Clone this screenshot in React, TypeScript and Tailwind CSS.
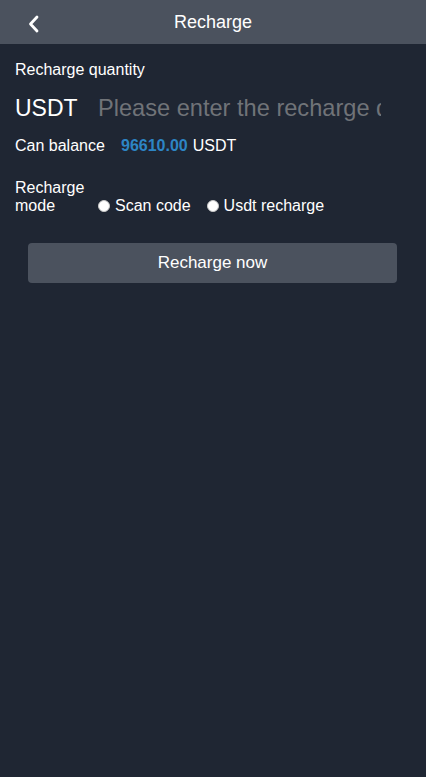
import { useState } from "react";

export default function App() {
  const [mode, setMode] = useState<string>("");
  const [amount, setAmount] = useState("");

  return (
    <div className="min-h-[777px] w-full bg-[#1f2633] text-white font-['Liberation_Sans',Arial,sans-serif]">
      <header className="relative flex h-11 items-center justify-center bg-[#4b525e]">
        <button className="absolute left-[23px] top-[11px] p-1" aria-label="Back">
          <svg width="14" height="18" viewBox="0 0 14 18" fill="none">
            <path d="M10 2 L3.5 9 L10 16" stroke="white" strokeWidth="2.8" strokeLinecap="round" strokeLinejoin="round" />
          </svg>
        </button>
        <h1 className="text-[18px] leading-none">Recharge</h1>
      </header>

      <main className="px-[15px]">
        <div className="pt-[17px] text-[16px] leading-[18px]">Recharge quantity</div>

        <div className="mt-[15px] flex items-center">
          <span className="w-[83px] text-[23px] leading-[28px]">USDT</span>
          <input
            value={amount}
            onChange={(e) => setAmount(e.target.value)}
            placeholder="Please enter the recharge quantity"
            className="w-[283px] bg-transparent text-[23.6px] leading-[28px] text-white outline-none placeholder:text-[#707378]"
          />
        </div>

        <div className="mt-[15px] flex items-center text-[16px] leading-[18px]">
          <span className="w-[106px]">Can balance</span>
          <span className="font-bold text-[#2d85c5]">96610.00</span>
          <span className="ml-[5px]">USDT</span>
        </div>

        <div className="mt-[24px] flex items-end text-[16px] leading-[18px]">
          <span className="w-[83px]">
            Recharge
            <br />
            mode
          </span>
          {[
            { id: "scan", label: "Scan code" },
            { id: "usdt", label: "Usdt recharge" },
          ].map((o) => (
            <label key={o.id} className="mr-[16px] flex cursor-pointer items-center">
              <span
                onClick={() => setMode(o.id)}
                className="mr-[5px] flex h-[12px] w-[12px] items-center justify-center rounded-full border border-[#c8c8c8] bg-white"
              >
                {mode === o.id && <span className="h-[6px] w-[6px] rounded-full bg-[#2d85c5]" />}
              </span>
              <span onClick={() => setMode(o.id)}>{o.label}</span>
            </label>
          ))}
        </div>

        <button className="mx-[13px] mt-[28px] flex h-[40px] w-[369px] items-center justify-center rounded-[4px] bg-[#4b525e] text-[17px]">
          Recharge now
        </button>
      </main>
    </div>
  );
}
